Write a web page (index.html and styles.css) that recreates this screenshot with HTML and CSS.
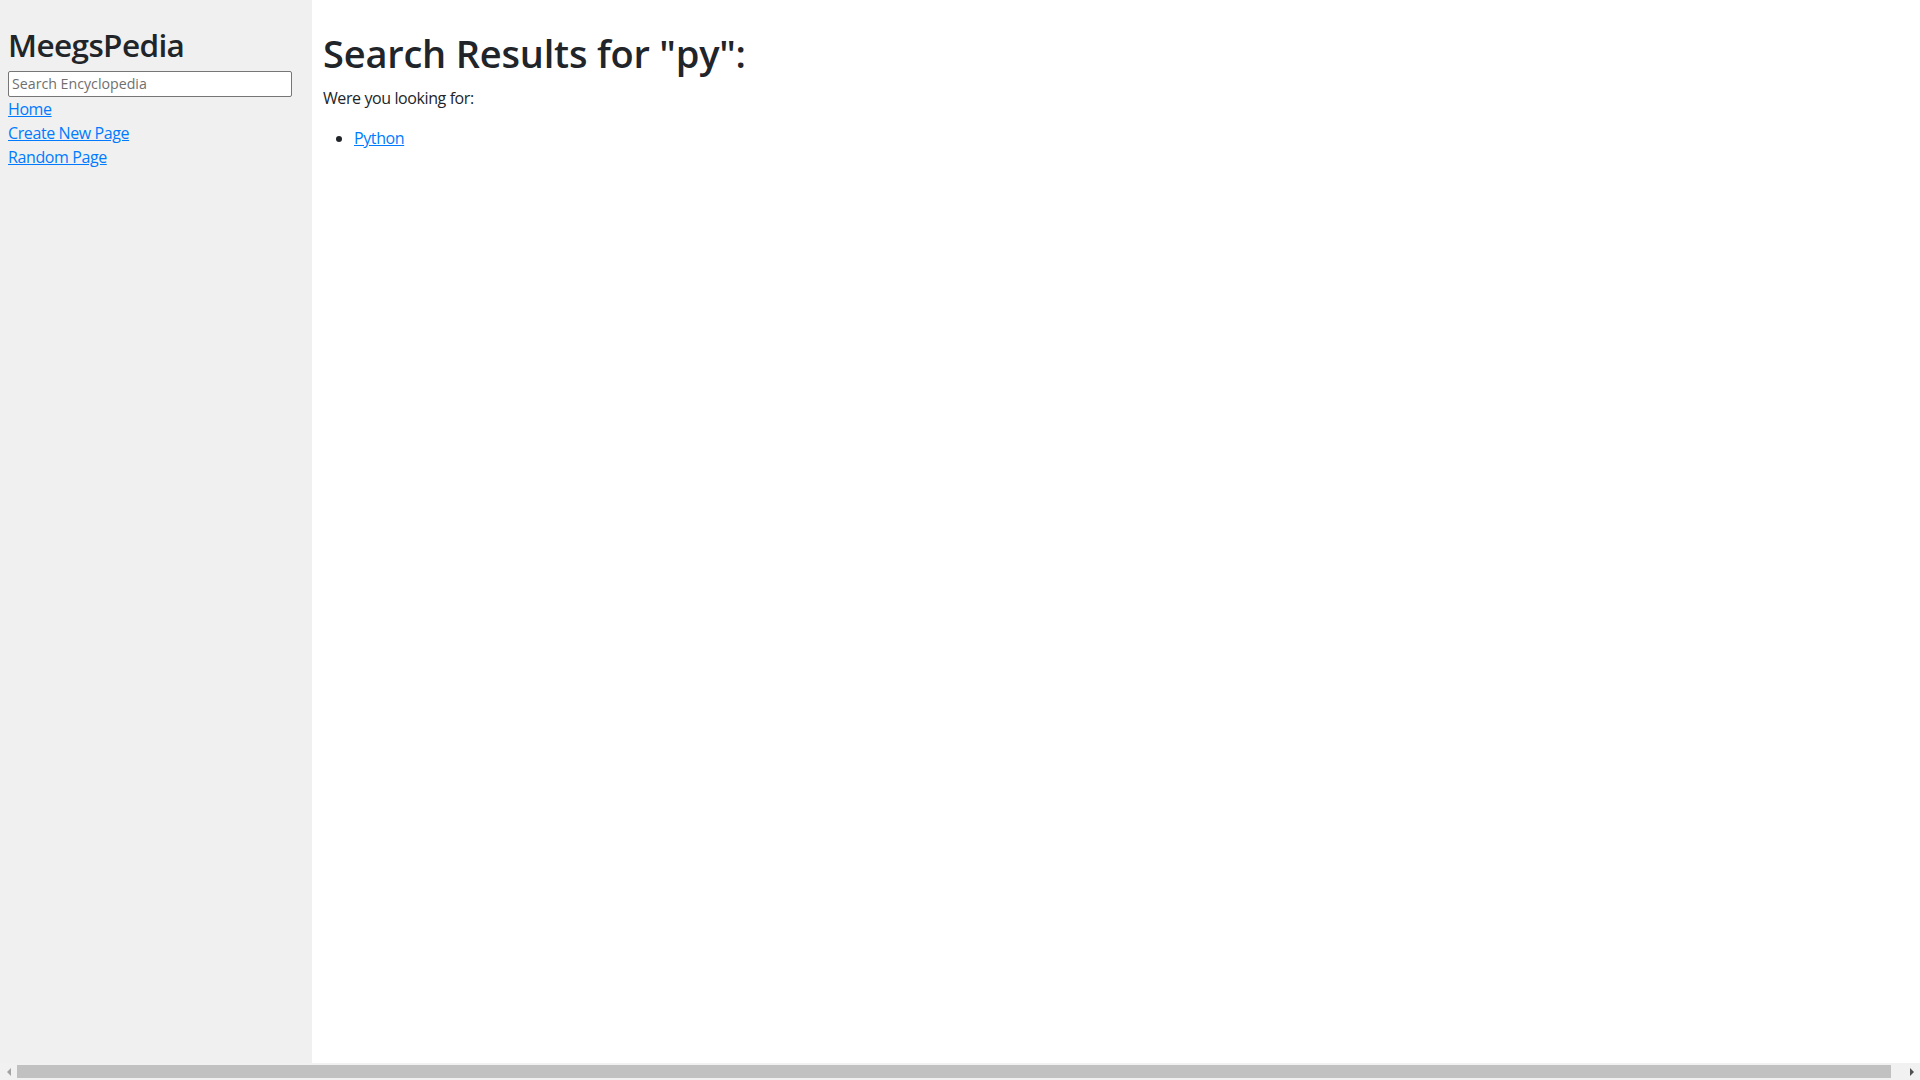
FILE: index.html
```html
<!DOCTYPE html>
<html lang="en">
<head>
<meta charset="utf-8">
<title>Encyclopedia</title>
<link rel="stylesheet" href="styles.css">
</head>
<body>
<div class="row">
  <aside class="sidebar">
    <h2 class="brand">MeegsPedia</h2>
    <form class="search-form">
      <input class="search" type="text" name="q" placeholder="Search Encyclopedia">
    </form>
    <nav class="nav">
      <div class="nav-item"><a href="#">Home</a></div>
      <div class="nav-item"><a href="#">Create New Page</a></div>
      <div class="nav-item"><a href="#">Random Page</a></div>
    </nav>
  </aside>
  <main class="main">
    <h1 class="title">Search Results for "py":</h1>
    <p class="lead-text">Were you looking for:</p>
    <ul class="results">
      <li><a href="#">Python</a></li>
    </ul>
  </main>
</div>
<div class="hscroll">
  <div class="hscroll-btn"><span class="arrow-left"></span></div>
  <div class="hscroll-track"><div class="hscroll-thumb"></div></div>
  <div class="hscroll-btn"><span class="arrow-right"></span></div>
</div>
</body>
</html>
```
FILE: styles.css
```css
html, body {
  height: 100%;
}
body {
  margin: 0;
  background: #ffffff;
  color: #212529;
  font-family: "Open Sans", "Noto Sans", sans-serif;
  font-size: 16px;
  line-height: 1.5;
  letter-spacing: -0.4px;
  display: flex;
  flex-direction: column;
  overflow: hidden;
}
a {
  color: #007bff;
  text-decoration: underline;
}
.row {
  display: flex;
  flex: 1;
  min-height: 0;
}
.sidebar {
  box-sizing: border-box;
  flex: 0 0 312px;
  background: #f0f0f0;
  padding: 26px 20px 0 8px;
}
.brand {
  margin: 0 0 7px 0;
  font-size: 31.5px;
  font-weight: 600;
  line-height: 1.2;
  letter-spacing: -0.6px;
}
.search-form {
  margin: 0;
}
.search {
  display: block;
  box-sizing: border-box;
  width: 100%;
  height: 26px;
  font-family: inherit;
  font-size: 14.2px;
  letter-spacing: 0;
  padding: 1px 3px;
  border: 1px solid #767676;
  border-radius: 2px;
  background: #fff;
  color: #212529;
}
.search::placeholder {
  color: #6f6f6f;
}
.nav {
  margin-top: 0;
}
.nav-item {
  line-height: 24px;
}
.main {
  flex: 1;
  padding: 31px 10px 10px 11px;
}
.title {
  margin: 0 0 9px 0;
  font-size: 38px;
  font-weight: 600;
  line-height: 1.2;
  letter-spacing: -0.2px;
}
.lead-text {
  margin: 0 0 16px 0;
}
.results {
  margin: 0;
  padding-left: 31px;
}
.hscroll {
  flex: 0 0 17px;
  display: flex;
  background: #f1f1f1;
}
.hscroll-btn {
  flex: 0 0 17px;
  display: flex;
  align-items: center;
  justify-content: center;
}
.arrow-left {
  width: 0;
  height: 0;
  border-top: 4px solid transparent;
  border-bottom: 4px solid transparent;
  border-right: 4px solid #a3a3a3;
}
.arrow-right {
  width: 0;
  height: 0;
  border-top: 4px solid transparent;
  border-bottom: 4px solid transparent;
  border-left: 4px solid #505050;
}
.hscroll-track {
  flex: 1;
  display: flex;
  align-items: center;
}
.hscroll-thumb {
  height: 13px;
  width: 1874px;
  background: #c1c1c1;
}
```
